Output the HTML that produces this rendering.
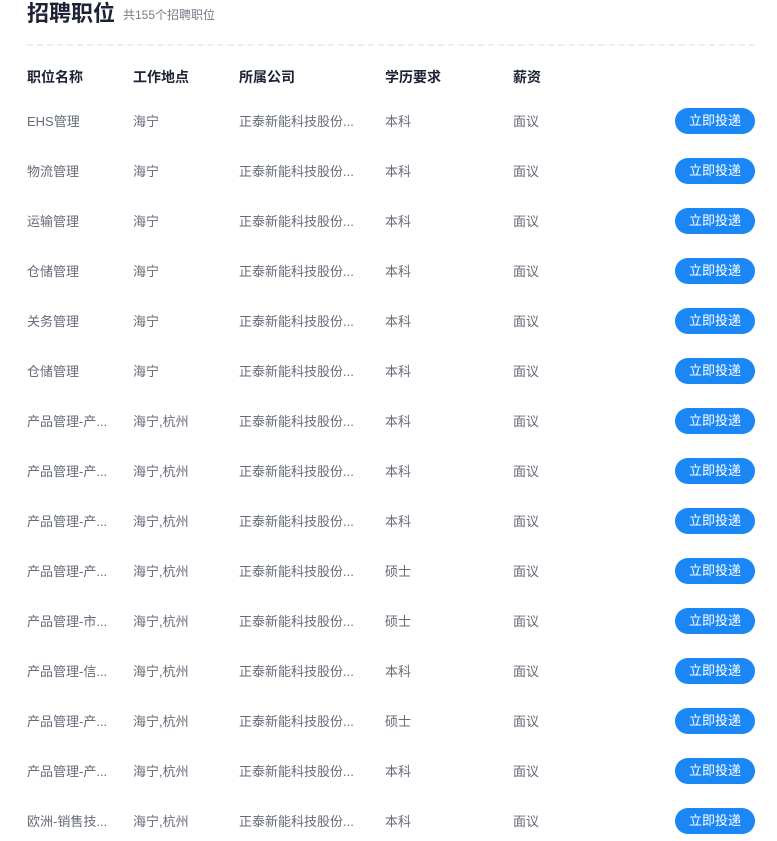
<!DOCTYPE html>
<html><head><meta charset="utf-8"><style>
*{margin:0;padding:0;box-sizing:border-box}
body{width:777px;height:841px;background:#fff;font-family:"Liberation Sans","Noto Sans CJK SC",sans-serif;position:relative;overflow:hidden;color:#666b78}
.t{position:absolute;left:27px;top:0px;font-size:22px;font-weight:bold;color:#1d2235;line-height:28px}
.s{position:absolute;left:123px;top:6px;font-size:12px;color:#777b86}
.line{position:absolute;left:27px;right:22px;top:44px;border-top:2px dashed #eceef2}
.r{position:absolute;left:0;width:777px;height:26px;font-size:13px;line-height:26px}
.r span{position:absolute;white-space:nowrap}
.h{font-weight:bold;color:#1d2235;font-size:14px}
.b{position:absolute;left:675px;width:80px;height:26px;border-radius:13px;background:#1a87f5;color:#fff;text-align:center;font-size:13px;line-height:26px}
</style></head><body>
<div class="t">招聘职位</div><div class="s">共155个招聘职位</div>
<div class="line"></div>
<div class="r h" style="top:64px"><span style="left:27px">职位名称</span><span style="left:133px">工作地点</span><span style="left:239px">所属公司</span><span style="left:385px">学历要求</span><span style="left:513px">薪资</span></div>
<div id="rows"></div>
<script>
var d=[["EHS管理","海宁","本科"],["物流管理","海宁","本科"],["运输管理","海宁","本科"],["仓储管理","海宁","本科"],["关务管理","海宁","本科"],["仓储管理","海宁","本科"],["产品管理-产...","海宁,杭州","本科"],["产品管理-产...","海宁,杭州","本科"],["产品管理-产...","海宁,杭州","本科"],["产品管理-产...","海宁,杭州","硕士"],["产品管理-市...","海宁,杭州","硕士"],["产品管理-信...","海宁,杭州","本科"],["产品管理-产...","海宁,杭州","硕士"],["产品管理-产...","海宁,杭州","本科"],["欧洲-销售技...","海宁,杭州","本科"]];
var h="";d.forEach(function(x,i){var y=108+i*50;h+='<div class="r" style="top:'+y+'px"><span style="left:27px;top:1px">'+x[0]+'</span><span style="left:133px;top:1px">'+x[1]+'</span><span style="left:239px;top:1px">正泰新能科技股份...</span><span style="left:385px;top:1px">'+x[2]+'</span><span style="left:513px;top:1px">面议</span><div class="b">立即投递</div></div>'});
document.getElementById("rows").innerHTML=h;
</script>
</body></html>
